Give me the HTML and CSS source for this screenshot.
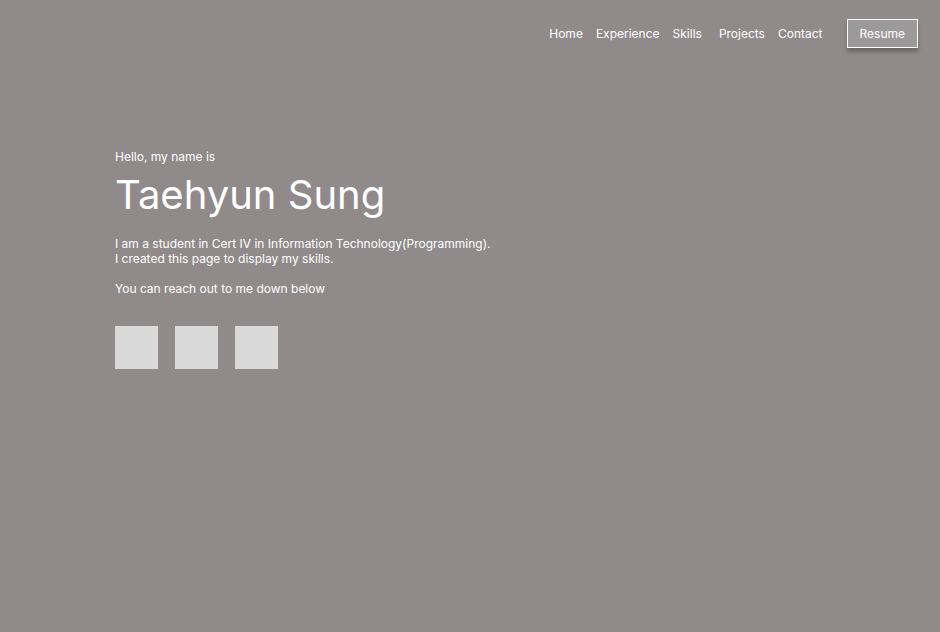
FILE: index.html
```html
<!DOCTYPE html>
<html lang="en">
<head>
<meta charset="utf-8">
<meta name="viewport" content="width=device-width, initial-scale=1">
<title>Taehyun Sung</title>
<link rel="stylesheet" href="styles.css">
</head>
<body>
<header class="header">
  <nav class="nav">
    <a href="#home">Home</a>
    <a href="#experience">Experience</a>
    <a href="#skills">Skills</a>
    <a class="nav-break" href="#projects">Projects</a>
    <a href="#contact">Contact</a>
  </nav>
  <button class="resume" type="button">Resume</button>
</header>
<main class="intro" id="home">
  <p class="text">Hello, my name is</p>
  <h1 class="name">Taehyun Sung</h1>
  <p class="text">I am a student in Cert IV in Information Technology(Programming).<br>I created this page to display my skills.</p>
  <p class="text reach">You can reach out to me down below</p>
  <div class="socials">
    <span class="social"></span>
    <span class="social"></span>
    <span class="social"></span>
  </div>
</main>
</body>
</html>
```
FILE: styles.css
```css
* {
  box-sizing: border-box;
}

body {
  margin: 0;
  min-height: 100vh;
  background: #908a8a;
  color: #fff;
  font: 12px/15px Inter, sans-serif;
}

.header {
  display: flex;
  justify-content: flex-end;
  align-items: center;
  gap: 24px;
  padding: 19px 22px 0;
}

.nav {
  display: flex;
  gap: 13px;
}

.nav a {
  color: inherit;
  text-decoration: none;
}

.nav .nav-break {
  margin-left: 4px;
}

.resume {
  padding: 6px 12px;
  border: 1px solid #fff;
  background: #9b999a;
  box-shadow: 0 4px 4px rgba(0, 0, 0, 0.25);
  color: inherit;
  font: inherit;
}

.intro {
  padding: 101px 24px 24px 115px;
}

.text {
  margin: 0;
}

.name {
  margin: 7px 0 17px;
  font-size: 40px;
  font-weight: 400;
  line-height: 48px;
}

.reach {
  margin-top: 15px;
}

.socials {
  display: flex;
  gap: 17px;
  margin-top: 30px;
}

.social {
  width: 43px;
  height: 43px;
  background: #d9d9d9;
}
```
